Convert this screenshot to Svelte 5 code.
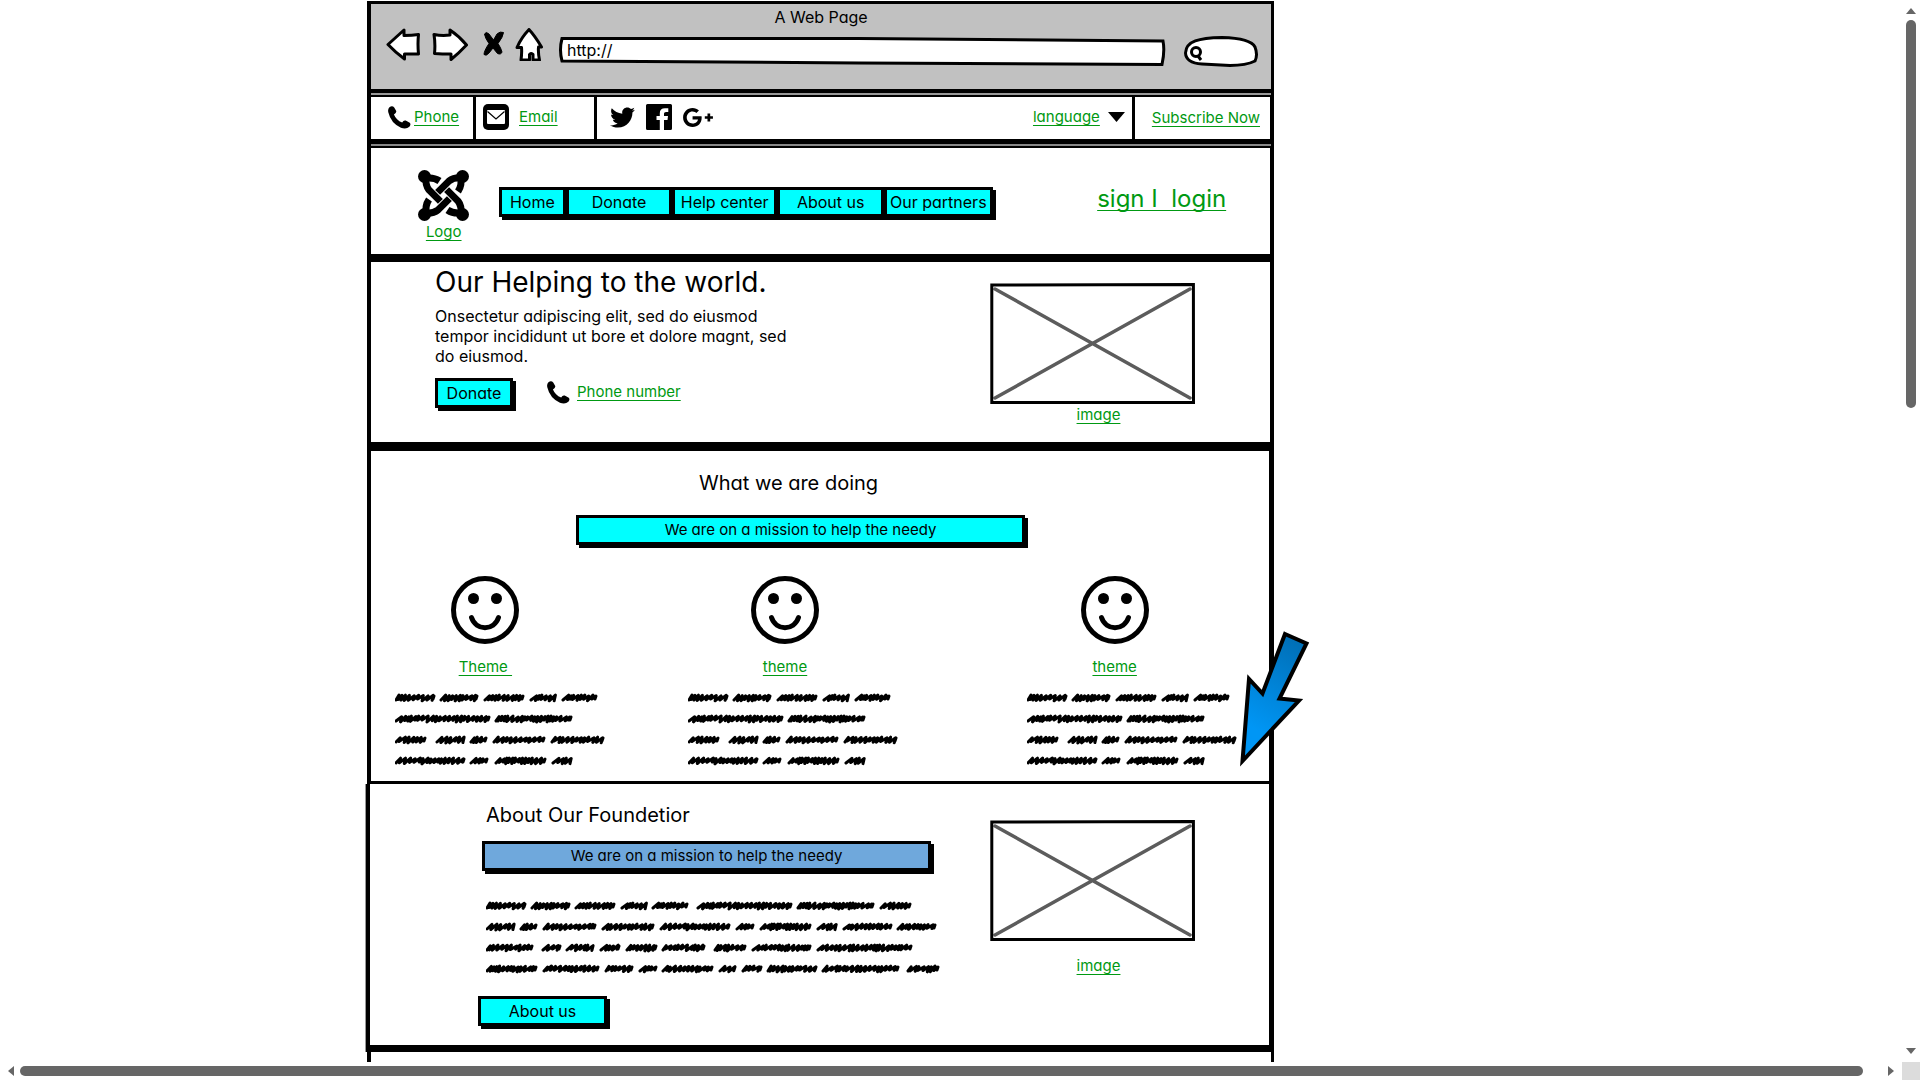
<script>
  const navItems = ['Home', 'Donate', 'Help center', 'About us', 'Our partners'];
  const themes = [{ label: 'Theme\u00a0' }, { label: 'theme' }, { label: 'theme' }];

  // Scribbled copy: every row is a list of [start, end] positions of its words.
  const shortCopy = [
    [[0, 40], [45, 83], [89, 129], [135, 161], [167, 202]],
    [[0, 95], [100, 177]],
    [[0, 31], [41, 70], [75, 92], [98, 150], [156, 209]],
    [[0, 70], [75, 93], [100, 151], [157, 177]]
  ];
  const longCopy = [
    [[0, 40], [45, 84], [89, 129], [135, 161], [166, 202], [211, 306], [311, 388], [394, 425]],
    [[0, 29], [34, 51], [57, 110], [116, 168], [174, 244], [250, 268], [274, 325], [331, 351], [357, 406], [411, 450]],
    [[0, 47], [56, 75], [80, 108], [114, 134], [140, 171], [176, 219], [228, 260], [266, 325], [331, 426]],
    [[0, 51], [57, 113], [119, 147], [153, 171], [176, 227], [233, 250], [256, 276], [281, 331], [336, 413], [421, 453]]
  ];

  function scribble(rows) {
    let seed = 7;
    const rnd = () => {
      seed = (seed * 16807) % 2147483647;
      return seed / 2147483647;
    };
    let d = '';
    rows.forEach((words, row) => {
      const y = 7 + row * 21;
      for (const [from, to] of words) {
        let x = from + 1;
        d += `M${x} ${y + 2}`;
        while (x < to - 6) {
          const step = 3 + rnd() * 3;
          const top = y - 2 - rnd();
          const low = y + 1 + rnd() * 2;
          d += `L${(x + step).toFixed(1)} ${top.toFixed(1)}L${(x + step - 1.2).toFixed(1)} ${low.toFixed(1)}`;
          x += step - 0.6;
        }
        d += `L${to - 1} ${y - 2}l-1 3`;
      }
    });
    return d;
  }
</script>

{#snippet phoneIcon()}
  <svg class="phone" viewBox="0 0 24 24" aria-hidden="true">
    <path d="M1.5 1.2Q4.500-.8 6.500 1.500L8.600 5.200Q9 7.300 6.200 8.800Q8.500 14.500 14.800 17.300Q16.300 14.400 18.500 15.200L22.700 17.500Q24.300 19.500 22.300 21.600Q19 24.600 13.500 22.600Q3 18 .3 6.500Q-.4 3 1.500 1.200Z" />
  </svg>
{/snippet}

{#snippet placeholder()}
  <svg class="placeholder" viewBox="0 0 205 121" preserveAspectRatio="none" role="img" aria-label="image">
    <path d="M5 6L200 115M200 6L5 115" stroke="#5c5c5c" stroke-width="3.500" stroke-linecap="round" />
    <path d="M1.800 2L203.400 1.500L203.500 119.500L1.800 119.500Z" fill="none" stroke="#000" stroke-width="3" />
  </svg>
{/snippet}

<div class="app">
  <main class="canvas">
    <div class="frame">
      <header class="browser">
        <div class="title">A Web Page</div>
        <div class="controls">
          <button class="tool back" aria-label="Back">
            <svg viewBox="0 0 34 33"><path d="M2 16.500L18 2V7.500Q26 7.500 32.500 6.500Q31.500 16 32.500 26H18.500V31Q9 24 2 16.500Z" /></svg>
          </button>
          <button class="tool forward" aria-label="Forward">
            <svg viewBox="0 0 36 33"><path d="M2 6.500Q10 8 18 7V2Q27 8 34.500 17Q27 25 19 31.500V26Q10 26 2.500 25.500Q3.500 16 2 6.500Z" /></svg>
          </button>
          <button class="tool stop" aria-label="Stop">
            <svg viewBox="0 0 21 33"><path class="solid" d="M1.500 6Q3 3 6 6L10.500 12L14 6Q17 3 20.500 4.500Q20 9 15 15.500Q18 20 19 24Q18 27 14.500 25.500L10 20L6 25Q3 28.500 1 26.500Q1 23 6 15.500Q2 10 1.500 6Z" /></svg>
          </button>
          <button class="tool home" aria-label="Home page">
            <svg viewBox="0 0 28 33"><path d="M14 1.500Q20 8 26.500 19H23.500Q23 25 24.500 32H18V26.500Q16.500 24.500 14.500 26.500V32H6Q7 25 6.500 19.500H2Q6 10 14 1.500Z" /></svg>
          </button>
          <label class="address">
            <svg viewBox="0 0 607 29" preserveAspectRatio="none" aria-hidden="true"><path d="M3 1.500L300 1.500L604 4Q606 14 603 27.500L300 26L3 24Q0 13 3 1.500Z" /></svg>
            <input type="text" value="http://" aria-label="Address" />
          </label>
          <label class="search">
            <svg viewBox="0 0 74 31" preserveAspectRatio="none" aria-hidden="true">
              <path d="M1.500 17C2 5 15 2 38 1.500C56 2 68 5 71 11Q74 19 71 25Q62 29.500 46 29.500L18 28Q2 27 1.500 17Z" />
              <circle cx="12" cy="16" r="4.500" /><path d="M14 20l3 4" />
            </svg>
            <input type="search" aria-label="Search" />
          </label>
        </div>
      </header>

      <section class="topbar">
        <div class="cell call">{@render phoneIcon()}<a href="#phone">Phone</a></div>
        <div class="cell mail">
          <svg class="envelope" viewBox="0 0 26 26" aria-hidden="true">
            <rect width="26" height="26" rx="5" /><rect x="4" y="6" width="18" height="14" rx="1" fill="#fff" />
            <path d="M4.500 7.500L13 15L21.500 7.500" fill="none" stroke="#000" stroke-width="1.200" />
          </svg>
          <a href="#email">Email</a>
        </div>
        <div class="cell social">
          <a href="#twitter" aria-label="Twitter"><svg class="bird" viewBox="1.500 4 21 17"><path d="M22.460 6C21.690 6.350 20.860 6.580 20 6.690C20.880 6.160 21.560 5.320 21.880 4.310C21.050 4.810 20.130 5.160 19.160 5.360C18.370 4.500 17.260 4 16 4C13.650 4 11.730 5.920 11.730 8.290C11.730 8.630 11.770 8.960 11.840 9.270C8.280 9.090 5.110 7.380 3 4.790C2.630 5.420 2.420 6.160 2.420 6.940C2.420 8.430 3.170 9.750 4.330 10.500C3.620 10.500 2.960 10.300 2.380 10V10.030C2.380 12.110 3.860 13.850 5.820 14.240C5.460 14.340 5.080 14.390 4.690 14.390C4.420 14.390 4.150 14.360 3.890 14.310C4.430 16 6 17.260 7.890 17.290C6.430 18.450 4.580 19.130 2.560 19.130C2.220 19.130 1.880 19.110 1.540 19.070C3.440 20.290 5.700 21 8.120 21C16 21 20.330 14.460 20.330 8.790L20.320 8.230C21.160 7.630 21.880 6.870 22.460 6Z" /></svg></a>
          <a href="#facebook" aria-label="Facebook"><svg class="square" viewBox="0 0 26 26"><path fill-rule="evenodd" d="M1.500 0H24.500Q26 0 26 1.500V24.500Q26 26 24.500 26H18V16H21.500L22 12H18V9.500Q18 8 20 8H22.300V4.300H19Q13.800 4.300 13.800 9.300V12H10.500V16H13.800V26H1.500Q0 26 0 24.500V1.500Q0 0 1.500 0Z" /></svg></a>
          <a href="#google-plus" aria-label="Google Plus"><svg class="gplus" viewBox="1 5 22 14"><path d="M23 11H21V9H19V11H17V13H19V15H21V13H23M8 11V13.400H12C11.800 14.400 10.800 16.400 8 16.400C5.600 16.400 3.700 14.400 3.700 12C3.700 9.600 5.600 7.600 8 7.600C9.400 7.600 10.300 8.200 10.800 8.700L12.700 6.900C11.500 5.700 9.900 5 8 5C4.100 5 1 8.100 1 12C1 15.900 4.100 19 8 19C12 19 14.700 16.200 14.700 12.200C14.700 11.700 14.700 11.400 14.600 11H8Z" /></svg></a>
        </div>
        <div class="cell language">
          <a href="#language">language</a>
          <svg class="caret" viewBox="0 0 17 10" aria-hidden="true"><path d="M0 0H17L8.500 10Z" /></svg>
        </div>
        <div class="cell subscribe"><a href="#subscribe">Subscribe Now</a></div>
      </section>

      <section class="masthead">
        <div class="brand">
          <svg class="logo" viewBox="0 0 51 51" aria-hidden="true">
            {#each [0, 90, 180, 270] as turn}
              <g transform="rotate({turn} 25.500 25.500)">
                <circle cx="44.500" cy="6.500" r="6.500" />
                <path d="M45 8Q36 7 31 11L19.600 22.400" />
                <path d="M6 8.500Q15 6.500 21.500 11" />
              </g>
            {/each}
          </svg>
          <a href="#logo">Logo</a>
        </div>
        <nav>
          {#each navItems as item}<button class="btn">{item}</button>{/each}
        </nav>
        <a class="login" href="#login">sign I&nbsp; login</a>
      </section>

      <section class="hero">
        <div class="pitch">
          <h1>Our Helping to the world.</h1>
          <p>Onsectetur adipiscing elit, sed do eiusmod<br />tempor incididunt ut bore et dolore magnt, sed<br />do eiusmod.</p>
          <div class="actions">
            <button class="btn">Donate</button>
            <div class="call">{@render phoneIcon()}<a href="#phone-number">Phone number</a></div>
          </div>
        </div>
        <figure>{@render placeholder()}<figcaption><a href="#image">image</a></figcaption></figure>
      </section>

      <section class="doing">
        <div class="intro">
          <h2>What we are doing</h2>
          <button class="btn banner">We are on a mission to help the needy</button>
        </div>
        <div class="themes">
          {#each themes as theme, i}
            <article>
              <svg class="face" viewBox="0 0 68 68" aria-hidden="true">
                <circle cx="34" cy="34" r="31.500" fill="none" stroke="#000" stroke-width="5" />
                <circle cx="22.500" cy="22.500" r="5.500" /><circle cx="45.500" cy="22.500" r="5.500" />
                <path d="M20.500 41.500C25 55 43 55 47.500 41.500" fill="none" stroke="#000" stroke-width="5" stroke-linecap="round" />
              </svg>
              <a href="#theme-{i + 1}">{theme.label}</a>
              <svg class="scribble short" viewBox="0 0 210 78" aria-hidden="true"><path d={scribble(shortCopy)} /></svg>
            </article>
          {/each}
        </div>
        <svg class="pointer" viewBox="0 0 72 138" aria-hidden="true">
          <defs>
            <linearGradient id="blue" x1="0.600" y1="0" x2="0.300" y2="1">
              <stop offset="0" stop-color="#0070b8" /><stop offset="0.800" stop-color="#0096f5" />
            </linearGradient>
          </defs>
          <path d="M47 4L68.500 13.500L41.500 68.500L61 70.500L4.500 131L11 49L24.500 63.500Z" fill="url(#blue)" stroke="#000" stroke-width="4" />
        </svg>
      </section>

      <section class="about">
        <div class="story">
          <h2>About Our Foundetior</h2>
          <button class="btn banner steel">We are on a mission to help the needy</button>
          <svg class="scribble long" viewBox="0 0 454 78" aria-hidden="true"><path d={scribble(longCopy)} /></svg>
          <button class="btn more">About us</button>
        </div>
        <figure>{@render placeholder()}<figcaption><a href="#about-image">image</a></figcaption></figure>
      </section>
    </div>
  </main>

  <div class="bar vertical" aria-hidden="true">
    <svg viewBox="0 0 10 6"><path d="M0 6L5 0L10 6Z" /></svg>
    <div class="track"><div class="thumb"></div></div>
    <svg viewBox="0 0 10 6"><path d="M0 0L5 6L10 0Z" /></svg>
  </div>
  <div class="bar horizontal" aria-hidden="true">
    <svg viewBox="0 0 6 10"><path d="M6 0L0 5L6 10Z" /></svg>
    <div class="track"><div class="thumb"></div></div>
    <svg viewBox="0 0 6 10"><path d="M0 0L6 5L0 10Z" /></svg>
  </div>
  <div class="corner"></div>
</div>

<style>
  :global(body) { margin: 0; background: #fff; }
  .app {
    display: grid;
    grid-template: minmax(0, 1fr) 18px / minmax(0, 1fr) 18px;
    height: 100vh;
    font: 16px/20px Inter, "Open Sans", sans-serif;
    font-feature-settings: "cv11";
    color: #000;
  }
  h1, h2, p, figure { margin: 0; font-weight: 400; }
  svg { display: block; flex: none; }
  button, input { font: inherit; font-feature-settings: inherit; color: inherit; }
  a {
    color: #009912;
    font-size: 15px;
    text-underline-offset: 3px;
    text-decoration-thickness: 1px;
    text-decoration-skip-ink: none;
    white-space: nowrap;
  }

  .canvas {
    display: grid;
    grid-template-columns: 367fr 907fr 628fr;
    overflow: hidden;
  }
  .frame {
    grid-column: 2;
    min-width: 0;
    margin-top: 1px;
    border: solid #000;
    border-width: 3px 3px 0 4px;
    box-sizing: border-box;
  }
  section { border: solid #000; border-width: 2px 1px 6px 0; }

  .browser {
    background: #c1c1c1;
    height: 85px;
    border-bottom: 4px solid #000;
    box-shadow: 0 2px #999;
    margin-bottom: 2px;
  }
  .title { text-align: center; padding-top: 3px; }
  .controls { display: flex; padding: 0 13px 0 15px; }
  .tool { padding: 0; border: 0; background: none; }
  .tool svg { height: 33px; fill: #fff; stroke: #000; stroke-width: 3; stroke-linejoin: round; }
  .tool .solid { fill: #000; stroke-width: 1; }
  .controls .tool { align-self: flex-start; padding-top: 1px; }
  .back { width: 34px; margin-right: 12px; }
  .forward { width: 36px; margin-right: 15px; }
  .stop { width: 21px; margin-right: 11px; }
  .home { width: 28px; margin-right: 16px; }
  .address, .search { position: relative; }
  .address svg, .search svg {
    position: absolute;
    inset: 0;
    width: 100%;
    height: 100%;
    fill: #fff;
    stroke: #000;
    stroke-width: 3;
  }
  .address { flex: 1; height: 29px; margin: 10px 18px 0 0; }
  .search { width: 74px; height: 31px; margin-top: 9px; }
  .address input, .search input {
    position: relative;
    width: 100%;
    height: 25px;
    padding: 0 8px;
    border: 0;
    background: none;
    outline: 0;
    box-sizing: border-box;
  }
  .search input { padding-left: 20px; }

  .topbar { display: flex; height: 42px; border-bottom-width: 5px; box-shadow: 0 2px #888; margin-bottom: 2px; }
  .cell { display: flex; align-items: center; box-sizing: border-box; padding-bottom: 2px; }
  .call { display: flex; align-items: center; gap: 4px; }
  .phone { width: 23px; height: 23px; }
  .cell.call { width: 105px; padding-left: 17px; gap: 3px; border-right: 3px solid #000; }
  .mail { width: 121px; padding-left: 7px; gap: 10px; border-right: 3px solid #000; }
  .envelope { width: 26px; height: 26px; }
  .social { flex: 1; padding-left: 13px; gap: 11px; }
  .bird { width: 25px; height: 21px; }
  .square { width: 26px; height: 26px; }
  .gplus { width: 30px; height: 19px; }
  .language { gap: 8px; padding-right: 7px; }
  .caret { width: 17px; height: 10px; }
  .subscribe { border-left: 3px solid #000; padding: 0 10px 0 17px; }

  .masthead {
    display: grid;
    grid-template-columns: 47fr 52fr 29fr 496fr 105fr 126fr 44fr;
    height: 106px;
  }
  .brand { grid-column: 2; padding-top: 22px; text-align: center; }
  .logo { width: 51px; height: 51px; }
  .logo path { fill: none; stroke: #000; stroke-width: 7; }
  nav {
    grid-column: 4;
    align-self: start;
    display: grid;
    grid-template-columns: 68fr 106fr 106fr 107fr 109fr;
    padding-top: 39px;
  }
  .btn {
    height: 30px;
    padding: 0;
    border: 3px solid #000;
    background: #0ff;
    box-shadow: 3px 3px #000;
    white-space: nowrap;
  }
  .login { grid-column: 6; padding-top: 37px; font-size: 24px; line-height: 28px; white-space: pre; }

  .hero { display: grid; grid-template-columns: 64fr 555fr 205fr 75fr; height: 180px; border-bottom-width: 7px; }
  .pitch { grid-column: 2; padding-top: 2px; }
  h1 { font-size: 28px; line-height: 36px; }
  p { padding-top: 6px; }
  .actions { display: flex; gap: 34px; padding-top: 12px; }
  .actions .btn { width: 78px; }
  .actions .call { height: 28px; gap: 7px; }
  .hero figure { grid-column: 3; padding-top: 21px; }
  .placeholder { width: 100%; height: 121px; }
  figcaption { text-align: center; padding-left: 12px; }

  .doing { position: relative; height: 330px; border-width: 2px 2px 3px 0; }
  .intro { display: grid; grid-template-columns: 205fr 450fr 244fr; row-gap: 20px; padding-top: 20px; }
  .intro > * { grid-column: 2; }
  .banner { font-size: 15px; }
  h2 { font-size: 20px; line-height: 24px; }
  .intro h2 { text-align: center; padding-right: 24px; }
  .themes {
    display: grid;
    grid-template-columns: 24fr 181fr 112fr 195fr 145fr 175fr 67fr;
    padding-top: 31px;
  }
  article { display: flex; flex-direction: column; align-items: center; min-width: 0; }
  article:nth-child(1) { grid-column: 2; }
  article:nth-child(2) { grid-column: 4; }
  article:nth-child(3) { grid-column: 6; }
  .face { width: 68px; height: 68px; margin-bottom: 13px; }
  .scribble { height: 78px; fill: none; stroke: #000; stroke-width: 3; stroke-linecap: round; stroke-linejoin: round; }
  .short { width: 210px; margin-top: 14px; align-self: flex-start; }
  .pointer { position: absolute; right: -41px; top: 179px; width: 72px; height: 138px; }

  .about {
    display: grid;
    grid-template-columns: 108fr 453fr 59fr 205fr 74fr;
    height: 261px;
    margin-left: -5px;
    border-width: 0 2px 7px 4px;
    background: #fff;
    box-shadow: -1px 0 #999;
  }
  .story { grid-column: 2; min-width: 0; display: flex; flex-direction: column; padding-top: 19px; }
  .about h2 { padding-left: 8px; }
  .steel { background: #6fa8dc; margin: 14px 0 0 4px; }
  .long { width: 454px; margin: 28px 0 0 8px; }
  .more { width: 129px; margin-top: 19px; }
  .about figure { grid-column: 4; padding-top: 36px; }
  .about figcaption { padding-top: 14px; }

  .bar { display: flex; align-items: center; fill: #666; }
  .thumb { background: #666; border-radius: 5px; }
  .track { flex: 1; display: flex; }
  .vertical { flex-direction: column; padding: 8px 0; grid-area: 1 / 2; }
  .vertical svg { width: 10px; height: 6px; }
  .vertical .track { width: 10px; padding: 6px 0; }
  .vertical .thumb { width: 100%; height: 38%; }
  .horizontal { grid-area: 2 / 1; padding: 0 8px; }
  .horizontal svg { width: 6px; height: 10px; }
  .horizontal .track { height: 10px; padding: 0 6px; }
  .horizontal .thumb { height: 100%; width: 99%; }
  .corner { grid-area: 2 / 2; background: #dcdcdc; }
</style>
